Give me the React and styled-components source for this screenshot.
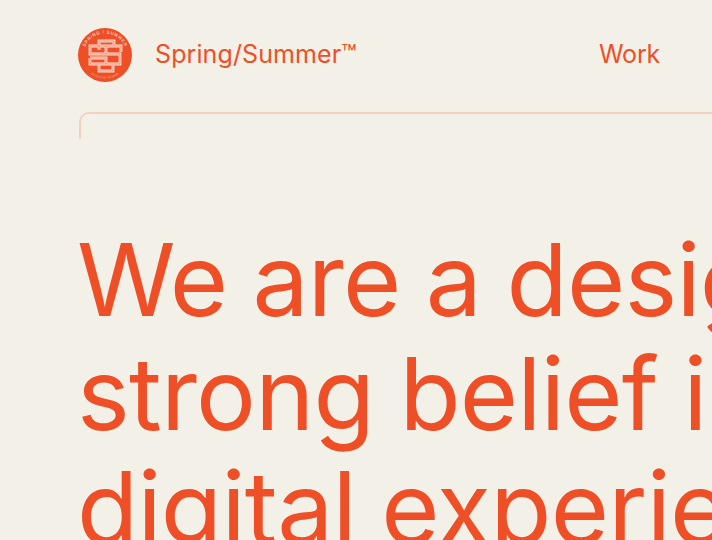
import React from "react";
import styled, { createGlobalStyle } from "styled-components";

const Global = createGlobalStyle`
  html, body { margin: 0; padding: 0; background: #f3f0e8; }
  body { width: 712px; height: 540px; overflow: hidden; }
`;

const Page = styled.div`
  width: 712px;
  height: 540px;
  overflow: hidden;
  box-sizing: border-box;
  padding: 28px 0 0 78px;
  background: #f3f0e8;
  color: #ee4f27;
  font-family: Inter, "Liberation Sans", Arial, sans-serif;
`;

const Header = styled.header`
  display: flex;
  align-items: center;
  height: 54px;
  width: 582px;
`;

const Brand = styled.a`
  font-size: 25px;
  letter-spacing: 0.1px;
  margin-left: 23px;
  padding-bottom: 2px;
  white-space: nowrap;
  flex: 1;
`;

const NavLink = styled.a`
  font-size: 25px;
  letter-spacing: -0.2px;
  padding-bottom: 2px;
  white-space: nowrap;
`;

const Frame = styled.div`
  box-sizing: border-box;
  margin: 30px 0 0 1px;
  width: 800px;
  height: 27px;
  border-top: 2px solid #f5d0bf;
  border-left: 2px solid #f5d0bf;
  border-top-left-radius: 10px;
`;

const Headline = styled.h1`
  margin: 84px 0 0 -1px;
  width: 1200px;
  font-size: 100px;
  font-weight: 400;
  line-height: 114px;
  letter-spacing: -0.8px;
  word-spacing: -2px;
  white-space: nowrap;
`;

const Line = styled.div``;

const monogram = [
  "M21 22V13H36V18",
  "M43 24V18H12V26H42V36H12V30",
  "M21 37V43H35V37",
  "M12 30H28V36",
  "M28 18V26",
];

const Logo = () => (
  <svg width="54" height="54" viewBox="0 0 54 54" aria-label="Spring/Summer logo">
    <defs>
      <path id="arcTop" d="M5.5 27a21.5 21.5 0 0 1 43 0" />
      <path id="arcBottom" d="M3.5 27a23.5 23.5 0 0 0 47 0" />
    </defs>
    <circle cx="27" cy="27" r="27" fill="#ee4f27" />
    <text fontFamily="'Liberation Sans', sans-serif" fontSize="4.4" fontWeight="700" fill="#f6c9b5" letterSpacing="0.7">
      <textPath href="#arcTop" startOffset="50%" textAnchor="middle">SPRING / SUMMER</textPath>
    </text>
    <text fontFamily="'Liberation Sans', sans-serif" fontSize="2.6" fill="#f6c9b5" letterSpacing="0.3">
      <textPath href="#arcBottom" startOffset="50%" textAnchor="middle">STUDIO OF DESIGN</textPath>
    </text>
    <g fill="none" stroke="#fbe6dc" strokeWidth="2.8">
      {monogram.map((d) => <path key={d} d={d} />)}
    </g>
    <g fill="none" stroke="#ee4f27" strokeWidth="0.6">
      {monogram.map((d) => <path key={d} d={d} />)}
    </g>
  </svg>
);

export default function App() {
  return (
    <>
      <Global />
      <Page>
        <Header>
          <Logo />
          <Brand>Spring/Summer™</Brand>
          <NavLink>Work</NavLink>
        </Header>
        <Frame />
        <Headline>
          <Line>We are a design studio with a</Line>
          <Line>strong belief in the power of</Line>
          <Line>digital experiences</Line>
        </Headline>
      </Page>
    </>
  );
}
